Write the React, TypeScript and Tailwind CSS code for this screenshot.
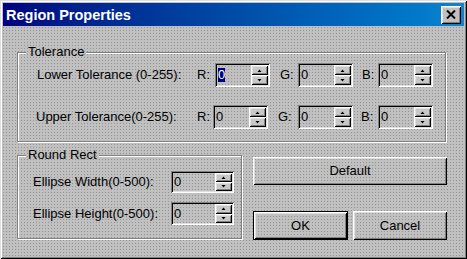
import React from "react";

const PAT =
  "bg-[#c0c0c0] bg-[conic-gradient(at_1px_1px,#0000_75%,#939393_0)] bg-[length:3px_3px] bg-fixed";

const RAISED =
  "shadow-[inset_1px_1px_0_#fff,inset_-1px_-1px_0_#000,inset_2px_2px_0_#dfdfdf,inset_-2px_-2px_0_#808080]";

const SUNKEN =
  "shadow-[inset_1px_1px_0_#808080,inset_-1px_-1px_0_#fff,inset_2px_2px_0_#000,inset_-2px_-2px_0_#dfdfdf]";

function Arrow({ up }: { up: boolean }) {
  return (
    <svg width="5" height="3" viewBox="0 0 5 3" className="block">
      {up ? <path d="M0.5 3 L2.5 0.5 L4.5 3 Z" fill="#000" /> : <path d="M0.5 0 L2.5 2.5 L4.5 0 Z" fill="#000" />}
    </svg>
  );
}

function Spin({ size, selected }: { size: string; selected?: boolean }) {
  return (
    <div className={`flex p-[2px] ${SUNKEN} ${size}`}>
      <div className="flex-1 flex items-center pl-[1px] text-[13px] leading-[14px] text-black">
        {selected ? <span className="bg-[#000080] text-white">0</span> : <span>0</span>}
      </div>
      <div className="w-[17px] flex flex-col">
        <div className={`flex-1 flex items-center justify-center bg-[#c8c8c8] ${RAISED}`}>
          <Arrow up />
        </div>
        <div className={`flex-1 flex items-center justify-center bg-[#c8c8c8] ${RAISED}`}>
          <Arrow up={false} />
        </div>
      </div>
    </div>
  );
}

function GroupBox({
  title,
  size,
  children,
}: {
  title: string;
  size: string;
  children: React.ReactNode;
}) {
  return (
    <div
      className={`relative border border-[#808080] shadow-[1px_1px_0_#fff,inset_1px_1px_0_#fff] ${size}`}
    >
      <div className={`absolute left-[8px] -top-[9px] px-[2px] leading-[15px] text-[13px] text-black ${PAT}`}>
        {title}
      </div>
      {children}
    </div>
  );
}

export default function App() {
  return (
    <div
      className={`w-[467px] h-[259px] p-[3px] flex flex-col overflow-hidden font-['Liberation_Sans',Arial,sans-serif] ${PAT} shadow-[inset_1px_1px_0_#dfdfdf,inset_-1px_-1px_0_#000,inset_2px_2px_0_#fff,inset_-2px_-2px_0_#808080]`}
    >
      {/* Title bar */}
      <div className="h-[23px] flex items-center justify-between pl-[3px] pr-[3px] bg-linear-to-r from-[#000080] to-[#1084d0]">
        <span className="text-white font-bold text-[14.5px] leading-[16px]">Region Properties</span>
        <div className={`w-[20px] h-[18px] flex items-center justify-center bg-[#c0c0c0] ${RAISED}`}>
          <svg width="10" height="9" viewBox="0 0 10 9">
            <path d="M1 0.5 L9 8.5 M9 0.5 L1 8.5" stroke="#000" strokeWidth="2" />
          </svg>
        </div>
      </div>

      {/* Body */}
      <div className="flex-1 flex flex-col pl-[14px] pt-[26px] text-[13px] text-black">
        <GroupBox title="Tolerance" size="w-[429px] h-[90px]">
          <div className="flex flex-col pt-[10px] pl-[19px] gap-[18px]">
            <div className="flex items-center h-[24px]">
              <span className="w-[160px]">Lower Tolerance (0-255):</span>
              <span className="w-[18px]">R:</span>
              <Spin size="w-[55px] h-[24px]" selected />
              <span className="ml-[10px] w-[18px]">G:</span>
              <Spin size="w-[55px] h-[24px]" />
              <span className="ml-[9px] w-[16px]">B:</span>
              <Spin size="w-[55px] h-[24px]" />
            </div>
            <div className="flex items-center h-[24px]">
              <span className="w-[160px] -ml-[1px] mr-[1px]">Upper Tolerance(0-255):</span>
              <span className="w-[16px]">R:</span>
              <Spin size="w-[55px] h-[24px]" />
              <span className="ml-[10px] w-[20px]">G:</span>
              <Spin size="w-[55px] h-[24px]" />
              <span className="ml-[8px] w-[17px]">B:</span>
              <Spin size="w-[55px] h-[24px]" />
            </div>
          </div>
        </GroupBox>

        <div className="flex mt-[13px]">
          <GroupBox title="Round Rect" size="w-[225px] h-[84px]">
            <div className="flex flex-col pt-[15px] pl-[15px] gap-[9px]">
              <div className="flex items-center">
                <span className="w-[138px]">Ellipse Width(0-500):</span>
                <Spin size="w-[63px] h-[22px]" />
              </div>
              <div className="flex items-center">
                <span className="w-[138px]">Ellipse Height(0-500):</span>
                <Spin size="w-[63px] h-[23px]" />
              </div>
            </div>
          </GroupBox>

          <div className="ml-[11px] mt-[2px] flex flex-col">
            <div className={`w-[194px] h-[28px] flex items-center justify-center ${RAISED}`}>Default</div>
            <div className="flex mt-[26px] gap-[5px]">
              <div className="w-[95px] h-[29px] border border-black">
                <div className={`w-full h-full flex items-center justify-center ${RAISED}`}>OK</div>
              </div>
              <div className={`w-[94px] h-[29px] flex items-center justify-center ${RAISED}`}>Cancel</div>
            </div>
          </div>
        </div>
      </div>
    </div>
  );
}
